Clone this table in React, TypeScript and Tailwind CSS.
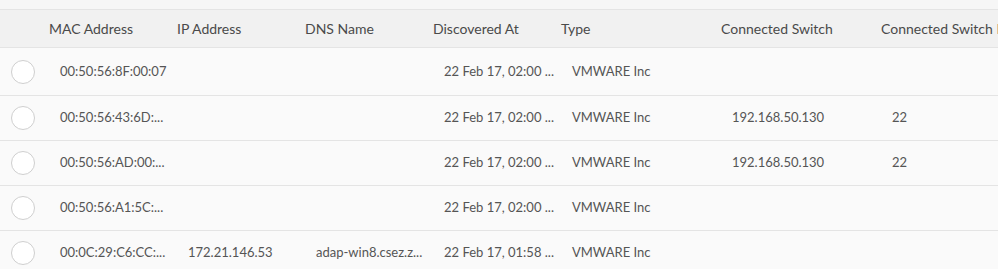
const columns = [
  { label: "MAC Address", width: "w-[128px]" },
  { label: "IP Address", width: "w-[128px]" },
  { label: "DNS Name", width: "w-[128px]" },
  { label: "Discovered At", width: "w-[128px]" },
  { label: "Type", width: "w-[160px]" },
  { label: "Connected Switch", width: "w-[160px]" },
  { label: "Connected Switch Port", width: "w-[160px]" },
];

const rows = [
  ["00:50:56:8F:00:07", "", "", "22 Feb 17, 02:00 ...", "VMWARE Inc", "", ""],
  ["00:50:56:43:6D:...", "", "", "22 Feb 17, 02:00 ...", "VMWARE Inc", "192.168.50.130", "22"],
  ["00:50:56:AD:00:...", "", "", "22 Feb 17, 02:00 ...", "VMWARE Inc", "192.168.50.130", "22"],
  ["00:50:56:A1:5C:...", "", "", "22 Feb 17, 02:00 ...", "VMWARE Inc", "", ""],
  ["00:0C:29:C6:CC:...", "172.21.146.53", "adap-win8.csez.z...", "22 Feb 17, 01:58 ...", "VMWARE Inc", "", ""],
];

export default function App() {
  return (
    <div className="h-[269px] w-[998px] overflow-hidden bg-[#fafafa] font-['Lato',sans-serif]">
      <div className="h-[10px] border-b border-[#e4e4e4] bg-[#f6f6f6]"></div>
      <div className="flex h-[38px] items-center whitespace-nowrap border-b border-[#e4e4e4] bg-[#f1f1f1] text-[14px] text-[#4a4a4a]">
        <div className="w-[49px] shrink-0"></div>
        {columns.map((col) => (
          <div key={col.label} className={`${col.width} shrink-0`}>
            {col.label}
          </div>
        ))}
      </div>
      {rows.map((row, i) => (
        <div
          key={i}
          className={`flex items-center whitespace-nowrap border-b border-[#e4e4e4] text-[13px] text-[#555] ${
            i === 0 ? "h-[48px]" : "h-[45px]"
          }`}
        >
          <div className="flex w-[60px] shrink-0 pl-[11px]">
            <span className="h-[24px] w-[24px] rounded-full border border-[#cfcfcf] bg-white"></span>
          </div>
          {row.map((cell, j) => (
            <div key={j} className={`${columns[j].width} shrink-0`}>
              {cell}
            </div>
          ))}
        </div>
      ))}
    </div>
  );
}
